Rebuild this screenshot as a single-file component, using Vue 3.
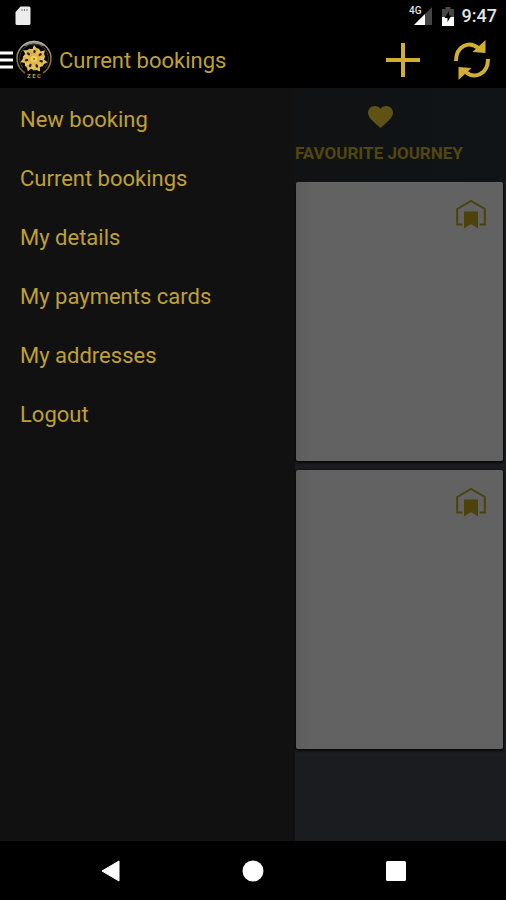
<script setup>
const menu = [
  'New booking',
  'Current bookings',
  'My details',
  'My payments cards',
  'My addresses',
  'Logout',
]
const cards = [1, 2]
const petals = [0, 51, 103, 154, 206, 257, 309]
</script>

<template>
  <div class="screen">
    <header class="status">
      <svg class="sd" width="16" height="20" viewBox="0 0 16 20" aria-hidden="true">
        <path d="M5.500 0.500H14a1.500 1.500 0 0 1 1.500 1.500V17.500a1.500 1.500 0 0 1-1.500 1.500H2a1.500 1.500 0 0 1-1.500-1.500V6z" fill="#ececec" />
        <path d="M7 3v2M9.500 3v2M12 3v2" stroke="#777" stroke-width="1" />
      </svg>
      <div class="indicators">
        <span class="network">4G</span>
        <svg class="signal" width="18" height="18" viewBox="0 0 18 18" aria-hidden="true">
          <path d="M18 0V18H0z" fill="#454545" />
          <path d="M11 7V18H0z" fill="#fff" />
        </svg>
        <svg class="battery" width="12" height="19" viewBox="0 0 12 19" aria-hidden="true">
          <path d="M3.500 0h5v2H12v9H0V2h3.500z" fill="#484848" />
          <path d="M0 10h12v9H0z" fill="#fff" />
          <path d="M7 4L2.500 11H5.500V15L9.500 8.500H7z" fill="#000" />
        </svg>
        <time>9:47</time>
      </div>
    </header>

    <div class="appbar">
      <button class="home" aria-label="Close menu">
        <svg width="13" height="20" viewBox="0 0 13 20" aria-hidden="true">
          <path d="M0 3H13M0 10H13M0 17H13" stroke="#fff" stroke-width="3" />
        </svg>
        <svg class="logo" width="38" height="42" viewBox="0 0 38 42" aria-hidden="true">
          <defs>
            <linearGradient id="rim" x1="0" y1="0" x2="0" y2="1">
              <stop offset="0" stop-color="#b4b0a4" />
              <stop offset="0.45" stop-color="#9a8548" />
              <stop offset="1" stop-color="#7d6528" />
            </linearGradient>
            <linearGradient id="gold" x1="0" y1="0" x2="1" y2="1">
              <stop offset="0" stop-color="#f4dc79" />
              <stop offset="1" stop-color="#c79622" />
            </linearGradient>
          </defs>
          <path d="M8 6.500Q19-3 30 6.500L27 7Q19 2.500 11 7z" fill="#8f8b7c" />
          <path d="M10 34A17 17 0 1 1 28 34" fill="none" stroke="url(#rim)" stroke-width="1.500" />
          <path d="M8 29A14.500 14.500 0 1 1 30 29" fill="none" stroke="#3c403e" stroke-width="1" />
          <g v-for="a in petals" :key="a" :transform="`rotate(${a} 19 20)`">
            <path d="M19 6L21.500 9L24.500 10L23 14L20 19H18L15 14L14.500 10L17.500 10z" fill="url(#gold)" />
            <ellipse cx="19.500" cy="12.500" rx="1.200" ry="1.800" fill="#2c1f06" />
          </g>
          <circle cx="19" cy="20" r="3.500" fill="#f0cd62" />
          <circle cx="19" cy="20" r="1" fill="#8e6817" />
          <text class="brand" x="19" y="39" text-anchor="middle">Z E C</text>
        </svg>
      </button>
      <h1>Current bookings</h1>
      <button class="action" aria-label="New booking">
        <svg width="34" height="34" viewBox="0 0 34 34" aria-hidden="true">
          <path d="M17 0V34M0 17H34" stroke="#d1ae34" stroke-width="4" />
        </svg>
      </button>
      <button class="action" aria-label="Refresh">
        <svg width="38" height="40" viewBox="0 0 38 40" aria-hidden="true">
          <path d="M3 21C3 6 16 0 26 8.500" fill="none" stroke="#d1ae34" stroke-width="4" />
          <path d="M32.500 0V13L19.500 12z" fill="#d1ae34" />
          <path d="M35 19C35 34 22 40 12 31.500" fill="none" stroke="#d1ae34" stroke-width="4" />
          <path d="M5.500 40V27L18.500 28z" fill="#d1ae34" />
        </svg>
      </button>
    </div>

    <div class="body">
      <nav class="drawer" aria-label="Main">
        <a v-for="item in menu" :key="item" href="#">{{ item }}</a>
      </nav>
      <main>
        <button class="tab">
          <svg width="25" height="22" viewBox="0 0 26 23" aria-hidden="true">
            <path d="M13 23L11 21.200C4 15 0 11.500 0 7C0 3 3 0 7 0C9.400 0 11.600 1.100 13 2.900C14.400 1.100 16.600 0 19 0C23 0 26 3 26 7C26 11.500 22 15 15 21.200z" fill="#5e5214" />
          </svg>
          <span>FAVOURITE JOURNEY</span>
        </button>
        <div class="list">
          <article v-for="card in cards" :key="card" class="card">
            <button aria-label="Save address">
              <svg width="30" height="30" viewBox="0 0 30 30" aria-hidden="true">
                <path d="M6.500 25.500H1.200V10L15 2L28.800 10V25.500H23.500" fill="none" stroke="#4b420c" stroke-width="2" />
                <path d="M8 12.500H22V29.500L15 25L8 29.500z" fill="#4b420c" />
              </svg>
            </button>
          </article>
        </div>
      </main>
    </div>

    <footer class="navbar">
      <button aria-label="Back">
        <svg width="22" height="22" viewBox="0 0 22 22" aria-hidden="true">
          <path d="M20 1V21L3 11z" fill="#fff" stroke="#fff" stroke-linejoin="round" />
        </svg>
      </button>
      <button aria-label="Home">
        <svg width="22" height="22" viewBox="0 0 22 22" aria-hidden="true">
          <circle cx="11" cy="11" r="10.500" fill="#fff" />
        </svg>
      </button>
      <button aria-label="Recent apps">
        <svg width="22" height="22" viewBox="0 0 22 22" aria-hidden="true">
          <rect x="1" y="1" width="20" height="20" rx="1.500" fill="#fff" />
        </svg>
      </button>
    </footer>
  </div>
</template>

<style>
body {
  background: #000;
}
</style>

<style scoped>
.screen {
  min-height: 100vh;
  display: flex;
  flex-direction: column;
  background: #000;
  color: #bfa036;
  font-family: Roboto, sans-serif;
}
svg {
  display: block;
  flex: none;
}
button {
  margin: 0;
  padding: 0;
  border: 0;
  background: none;
  color: inherit;
  font: inherit;
  display: flex;
  align-items: center;
  justify-content: center;
}
.status {
  height: 32px;
  display: flex;
  align-items: center;
  justify-content: space-between;
  padding: 0 9px 0 15px;
}
.indicators {
  display: flex;
  align-items: center;
  color: #e4e4e4;
}
.network {
  align-self: flex-start;
  font-size: 10px;
  line-height: 14px;
  font-weight: 500;
  margin-right: -8px;
  z-index: 1;
}
.battery {
  margin: 0 8px 0 10px;
}
time {
  font-size: 18px;
  line-height: 24px;
  font-weight: 500;
}
.appbar {
  height: 56px;
  display: flex;
  align-items: center;
}
.home {
  gap: 2px;
}
.brand {
  fill: #b89a42;
  font-size: 6px;
  font-weight: 700;
}
h1 {
  flex: 1;
  margin: 0 0 0 6px;
  padding-top: 2px;
  font-size: 22px;
  line-height: 32px;
  font-weight: 400;
}
.action {
  width: 69px;
  height: 56px;
}
.body {
  flex: 1;
  display: flex;
}
.drawer {
  width: 295px;
  flex: none;
  box-sizing: border-box;
  padding-top: 2px;
  display: flex;
  flex-direction: column;
  background: #111;
}
.drawer a {
  padding: 0 20px;
  font-size: 22px;
  line-height: 59px;
  color: #bfa036;
  text-decoration: none;
}
main {
  flex: 1;
  min-width: 0;
  background: #1a1c1f;
}
.tab {
  width: 100%;
  height: 93px;
  box-sizing: border-box;
  padding-top: 2px;
  flex-direction: column;
  align-items: flex-start;
  gap: 13px;
  background: linear-gradient(90deg, #101213, #101417);
  color: #51470f;
  font-size: 17px;
  line-height: 24px;
  font-weight: 700;
  white-space: nowrap;
}
.tab svg {
  margin-left: 73px;
}
.list {
  display: flex;
  flex-direction: column;
  gap: 9px;
  padding: 1px 3px 0 1px;
}
.card {
  height: 279px;
  box-sizing: border-box;
  padding: 17px 17px 0 0;
  display: flex;
  align-items: flex-start;
  justify-content: flex-end;
  background: linear-gradient(90deg, #5d5d5d, #626262 16px);
  border-radius: 2px;
  box-shadow: 0 1px 2px 1px #08090a;
}
.navbar {
  height: 59px;
  display: flex;
  justify-content: center;
  gap: 73px;
}
.navbar button {
  width: 70px;
}
</style>
